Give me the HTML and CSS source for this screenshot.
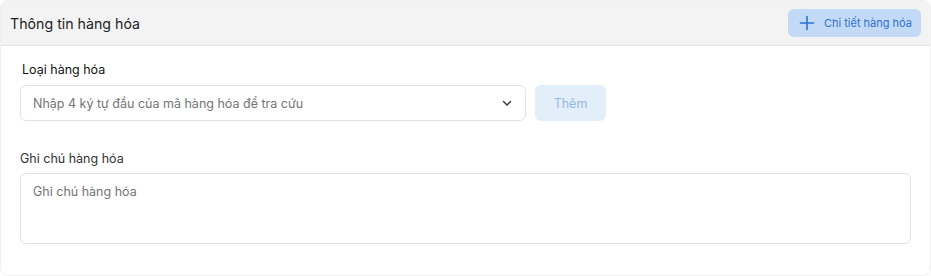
FILE: index.html
```html
<!DOCTYPE html>
<html lang="vi">
<head>
    <meta charset="UTF-8">
    <title>Thông tin hàng hóa</title>
    <link rel="stylesheet" href="styles.css">
</head>
<body>
    <div class="card">
        <!-- Header -->
        <div class="card-header">
            <h2 class="card-title">Thông tin hàng hóa</h2>
            <button class="btn-detail">
                <svg width="16" height="16" viewBox="0 0 16 16" fill="none" stroke="currentColor" stroke-width="1.6" stroke-linecap="round">
                    <path d="M8 1.5v13M1.5 8h13"/>
                </svg>
                <span>Chi tiết hàng hóa</span>
            </button>
        </div>

        <!-- Body -->
        <div class="card-body">
            <div class="field">
                <label class="field-label label-strong">Loại hàng hóa</label>
                <div class="select-row">
                    <div class="select">
                        <span class="placeholder">Nhập 4 ký tự đầu của mã hàng hóa để tra cứu</span>
                        <svg width="12" height="12" viewBox="0 0 12 12" fill="none" stroke="#333" stroke-width="1.4" stroke-linecap="round" stroke-linejoin="round">
                            <path d="M2.5 4.5L6 8l3.5-3.5"/>
                        </svg>
                    </div>
                    <button class="btn-add" disabled>Thêm</button>
                </div>
            </div>

            <div class="field field-note">
                <label class="field-label">Ghi chú hàng hóa</label>
                <textarea class="textarea" placeholder="Ghi chú hàng hóa"></textarea>
            </div>
        </div>
    </div>
</body>
</html>
```

FILE: styles.css
```css
:root {
    --border: #e2e2e2;
    --blue: #2f6fd0;
}

body {
    margin: 0;
    font-family: Inter, 'Noto Sans', sans-serif;
    background: #fff;
}

/* Card */
.card {
    width: 931px;
    height: 276px;
    box-sizing: border-box;
    border: 1px solid #f0f0f0;
    border-radius: 8px;
    overflow: hidden;
    background: #fff;
}

.card-header {
    height: 45px;
    box-sizing: border-box;
    background: #f3f3f3;
    border-bottom: 1px solid var(--border);
    display: flex;
    align-items: center;
    justify-content: space-between;
    padding: 0 9px 0 9px;
}

.card-title {
    margin: 0;
    font-size: 14.2px;
    font-weight: 400;
    color: #1d1d1d;
}

.btn-detail {
    height: 28px;
    display: flex;
    align-items: center;
    gap: 9px;
    padding: 0 9px 0 11px;
    border: none;
    border-radius: 6px;
    background: #c3daf6;
    color: var(--blue);
    font-family: inherit;
    font-size: 11px;
    cursor: pointer;
}

.card-body {
    padding: 16px 19px 0 19px;
}

.field {
    display: flex;
    flex-direction: column;
}

.field-label {
    font-size: 12.5px;
    color: #333;
    margin-bottom: 8px;
}

.label-strong {
    color: #111;
    padding-left: 2px;
}

.select-row {
    display: flex;
    gap: 9px;
}

.select {
    width: 506px;
    height: 36px;
    box-sizing: border-box;
    border: 1px solid var(--border);
    border-radius: 6px;
    display: flex;
    align-items: center;
    justify-content: space-between;
    padding: 0 12px 0 12px;
}

.placeholder {
    font-size: 12.5px;
    color: #757575;
}

.btn-add {
    width: 71px;
    height: 36px;
    border: none;
    border-radius: 6px;
    background: #e3eefb;
    color: #94b8e6;
    font-family: inherit;
    font-size: 12.5px;
}

.field-note {
    margin-top: 30px;
}

.field-note .field-label {
    margin-bottom: 7px;
}

.textarea {
    width: 891px;
    height: 71px;
    box-sizing: border-box;
    border: 1px solid var(--border);
    border-radius: 6px;
    padding: 10px 12px;
    font-family: inherit;
    font-size: 12.5px;
    resize: none;
    outline: none;
}

.textarea::placeholder {
    color: #757575;
}
```
